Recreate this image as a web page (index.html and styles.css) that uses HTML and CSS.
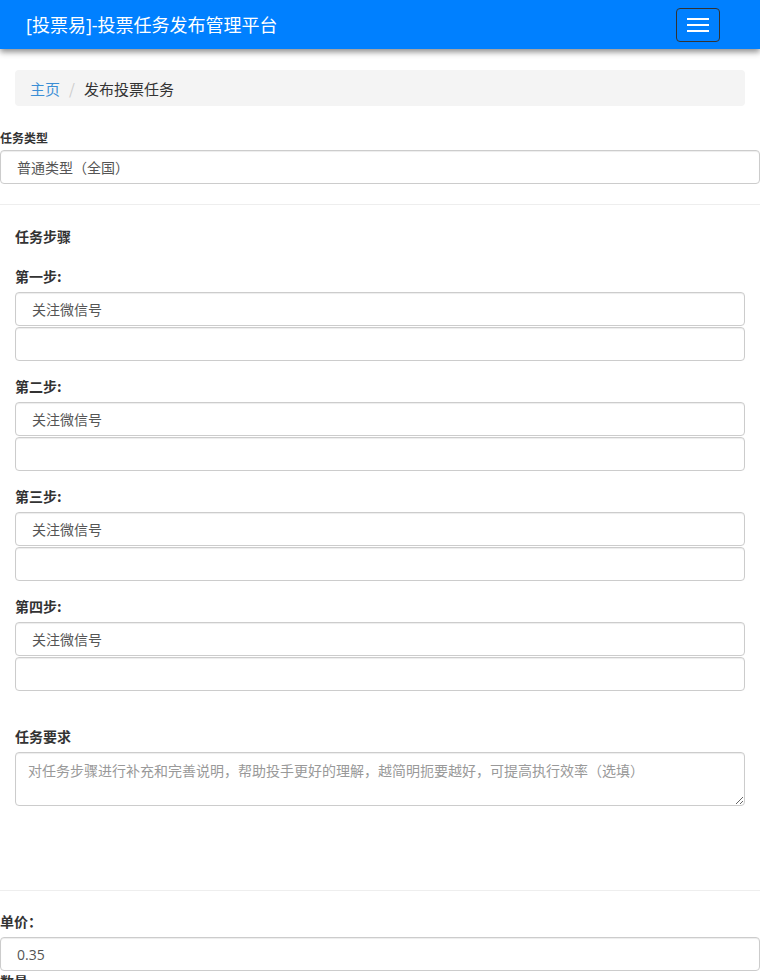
FILE: index.html
```html
<!DOCTYPE html>
<html lang="zh-CN">
<head>
<meta charset="utf-8">
<title>发布投票任务</title>
<link rel="stylesheet" href="styles.css">
</head>
<body>
<nav class="navbar">
  <span class="brand">[投票易]-投票任务发布管理平台</span>
  <button class="toggler" type="button" aria-label="menu">
    <span class="bar"></span><span class="bar"></span><span class="bar"></span>
  </button>
</nav>
<div class="crumb-wrap">
  <ol class="breadcrumb">
    <li class="crumb-link">主页</li>
    <li class="crumb-sep">/</li>
    <li class="crumb-active">发布投票任务</li>
  </ol>
</div>
<div class="type-group">
  <label class="small-label">任务类型</label>
  <div class="control full">普通类型（全国）</div>
</div>
<hr class="divider">
<div class="steps">
  <h4 class="section-title">任务步骤</h4>
  <div class="step">
    <label class="step-label">第一步:</label>
    <div class="control">关注微信号</div>
    <div class="control second"></div>
  </div>
  <div class="step">
    <label class="step-label">第二步:</label>
    <div class="control">关注微信号</div>
    <div class="control second"></div>
  </div>
  <div class="step">
    <label class="step-label">第三步:</label>
    <div class="control">关注微信号</div>
    <div class="control second"></div>
  </div>
  <div class="step">
    <label class="step-label">第四步:</label>
    <div class="control">关注微信号</div>
    <div class="control second"></div>
  </div>
  <h4 class="section-title req">任务要求</h4>
  <textarea class="textarea" placeholder="对任务步骤进行补充和完善说明，帮助投手更好的理解，越简明扼要越好，可提高执行效率（选填）"></textarea>
</div>
<hr class="divider lower">
<div class="price-group">
  <label class="price-label">单价：</label>
  <div class="control full">0.35</div>
  <label class="price-label">数量</label>
</div>
</body>
</html>
```
FILE: styles.css
```css
* { box-sizing: border-box; }
html, body { margin: 0; padding: 0; }
body {
  font-family: "Open Sans", "Noto Sans CJK SC", sans-serif;
  font-size: 14px;
  color: #333;
  background: #fff;
  width: 760px;
  overflow: hidden;
}
.navbar {
  height: 49px;
  background: #0080ff;
  display: flex;
  align-items: center;
  justify-content: space-between;
  padding: 0 40px 0 26px;
  box-shadow: 0 3px 6px rgba(0,0,0,0.45);
  position: relative;
  z-index: 2;
}
.brand {
  color: #fff;
  font-size: 18px;
  font-family: "Open Sans", "Noto Sans CJK SC", sans-serif;
  line-height: 24px;
  margin-top: 1px;
}
.toggler {
  width: 44px;
  height: 34px;
  border: 1px solid #333;
  border-radius: 4px;
  background: transparent;
  display: flex;
  flex-direction: column;
  align-items: center;
  justify-content: center;
  gap: 4px;
  padding: 0;
  margin-top: 1px;
}
.bar {
  display: block;
  width: 22px;
  height: 2px;
  background: #fff;
}
.crumb-wrap { padding: 21px 15px 0; }
.breadcrumb {
  list-style: none;
  margin: 0;
  height: 36px;
  padding: 0 15px;
  background: #f4f4f4;
  border-radius: 4px;
  display: flex;
  align-items: center;
  font-size: 15px;
  font-family: "Noto Sans CJK SC", sans-serif;
}
.crumb-link { color: #3b8fd6; }
.crumb-sep { color: #ccc; padding: 0 9px; }
.crumb-active { color: #333; }
.type-group { padding-top: 23px; }
.small-label {
  display: block;
  font-size: 12px;
  font-weight: bold;
  line-height: 17px;
  margin-bottom: 4px;
  font-family: "Noto Sans CJK SC", sans-serif;
}
.control {
  height: 34px;
  border: 1px solid #ccc;
  border-radius: 4px;
  padding: 0 16px;
  display: flex;
  align-items: center;
  color: #555;
  font-size: 14px;
  font-family: "Open Sans", "Noto Sans CJK SC", sans-serif;
  box-shadow: inset 0 1px 1px rgba(0,0,0,0.075);
  background: #fff;
}
.control.second { margin-top: 1px; }
.divider {
  border: 0;
  border-top: 1px solid #eee;
  margin: 20px 0 0;
}
.steps { padding: 21px 15px 0; }
.section-title {
  margin: 0 0 21px;
  font-size: 14px;
  font-weight: bold;
  line-height: 20px;
  font-family: "Noto Sans CJK SC", sans-serif;
}
.section-title.req { margin: 35px 0 6px; }
.step { margin-bottom: 16px; }
.step:nth-of-type(4) { margin-bottom: 0; }
.step-label {
  display: block;
  font-weight: bold;
  line-height: 18px;
  margin-bottom: 7px;
  font-family: "Noto Sans CJK SC", sans-serif;
}
.textarea {
  display: block;
  width: 100%;
  height: 54px;
  border: 1px solid #ccc;
  border-radius: 4px;
  padding: 8px 12px;
  font-family: "Open Sans", "Noto Sans CJK SC", sans-serif;
  font-size: 14px;
  line-height: 20px;
  color: #555;
  resize: vertical;
  box-shadow: inset 0 1px 1px rgba(0,0,0,0.075);
}
.textarea::placeholder { color: #999; }
.divider.lower { margin-top: 84px; }
.price-group { padding-top: 20px; }
.price-label {
  display: block;
  font-weight: bold;
  line-height: 20px;
  margin-bottom: 6px;
  font-family: "Noto Sans CJK SC", sans-serif;
}
```
